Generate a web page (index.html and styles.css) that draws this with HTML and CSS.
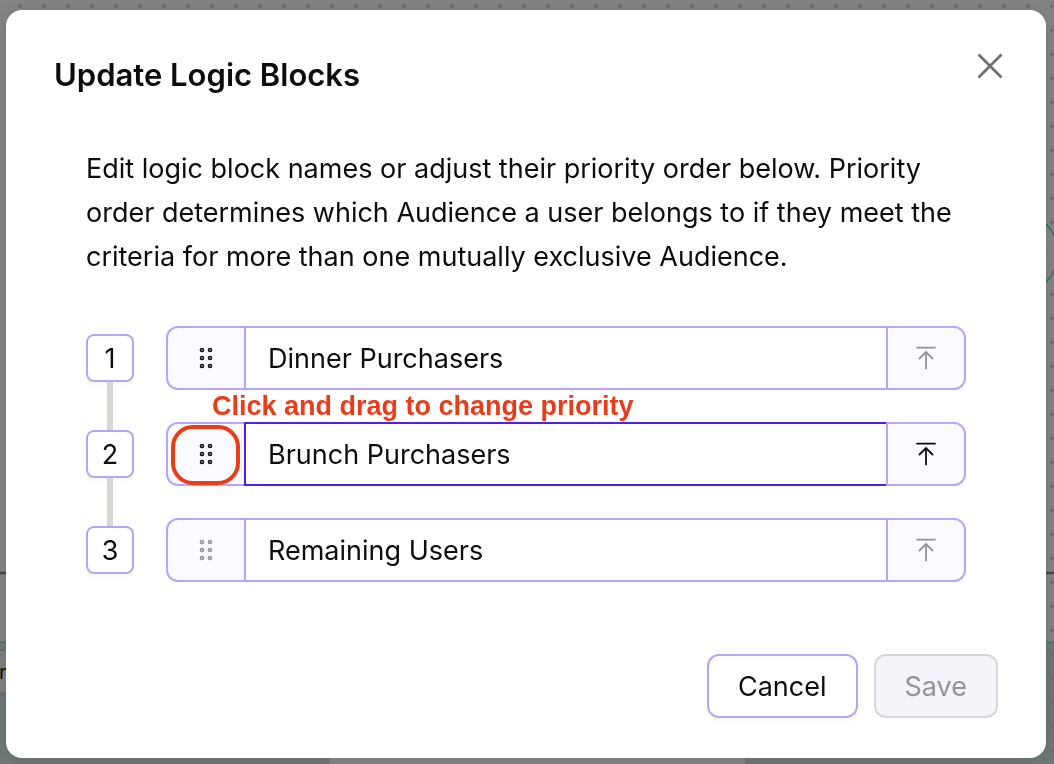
FILE: index.html
```
<!DOCTYPE html>
<html lang="en">
<head>
    <meta charset="UTF-8">
    <meta name="viewport" content="width=device-width, initial-scale=1.0">
    <title>Update Logic Blocks</title>
    <link rel="stylesheet" href="styles.css">
</head>
<body>
    <!-- dimmed canvas behind the dialog -->
    <svg class="canvas" aria-hidden="true">
        <defs>
            <pattern id="dots" width="24" height="24" patternUnits="userSpaceOnUse">
                <circle cx="20" cy="6" r="2" fill="#6f6f6f"/>
            </pattern>
        </defs>
        <rect width="100%" height="100%" fill="#848484"/>
        <rect y="642" width="330" height="400" fill="#6f7876"/>
        <rect x="745" y="642" width="100%" height="400" fill="#6f7876"/>
        <rect width="100%" height="642" fill="url(#dots)"/>
        <rect x="745" y="642" width="100%" height="400" fill="url(#dots)"/>
        <path d="M0 573H2000" stroke="#43464a" stroke-width="2.6"/>
        <path d="M0 642.5H2000" stroke="#4e7d79" stroke-width="3"/>
        <circle cx="1017" cy="253" r="41" fill="#848484" stroke="#2f6f69" stroke-width="1.5"/>
        <rect x="-60" y="650" width="120" height="43" fill="#808080" stroke="#70688c" stroke-width="2"/>
        <text x="-1" y="679" class="canvas-text">r</text>
    </svg>

    <div class="dialog" role="dialog" aria-labelledby="dialogTitle">
        <header class="dialog-header">
            <h1 id="dialogTitle">Update Logic Blocks</h1>
            <button type="button" class="close" aria-label="Close">
                <svg width="26" height="26" viewBox="0 0 26 26"><path d="M1.5 1.5l23 23M24.5 1.5l-23 23"/></svg>
            </button>
        </header>

        <form id="blocksForm">
            <div class="dialog-body">
                <p>Edit logic block names or adjust their priority order below. Priority order determines which Audience a user belongs to if they meet the criteria for more than one mutually exclusive Audience.</p>

                <div class="blocks">
                    <div class="steps">
                        <span class="step">1</span>
                        <span class="connector"></span>
                        <span class="step">2</span>
                        <span class="connector"></span>
                        <span class="step">3</span>
                    </div>

                    <div class="rows">
                        <div class="row">
                            <button type="button" class="handle" aria-label="Drag block 1">
                                <svg width="14" height="22" viewBox="0 0 14 22"><circle cx="3" cy="3" r="1.6"/><circle cx="11" cy="3" r="1.6"/><circle cx="3" cy="11" r="1.6"/><circle cx="11" cy="11" r="1.6"/><circle cx="3" cy="19" r="1.6"/><circle cx="11" cy="19" r="1.6"/></svg>
                            </button>
                            <input type="text" aria-label="Block 1 name" value="Dinner Purchasers">
                            <button type="button" class="to-top" aria-label="Move block 1 to top" disabled>
                                <svg width="20" height="24" viewBox="0 0 20 24"><path d="M1 1.6h18M10 22.5V6M3.5 12.5L10 6l6.5 6.5"/></svg>
                            </button>
                        </div>

                        <div class="row active">
                            <button type="button" class="handle" aria-label="Drag block 2">
                                <svg width="14" height="22" viewBox="0 0 14 22"><circle cx="3" cy="3" r="1.6"/><circle cx="11" cy="3" r="1.6"/><circle cx="3" cy="11" r="1.6"/><circle cx="11" cy="11" r="1.6"/><circle cx="3" cy="19" r="1.6"/><circle cx="11" cy="19" r="1.6"/></svg>
                            </button>
                            <input type="text" aria-label="Block 2 name" value="Brunch Purchasers">
                            <button type="button" class="to-top" aria-label="Move block 2 to top">
                                <svg width="20" height="24" viewBox="0 0 20 24"><path d="M1 1.6h18M10 22.5V6M3.5 12.5L10 6l6.5 6.5"/></svg>
                            </button>
                            <span class="hint">Click and drag to change priority</span>
                            <span class="hint-ring"></span>
                        </div>

                        <div class="row">
                            <button type="button" class="handle" aria-label="Drag block 3" disabled>
                                <svg width="14" height="22" viewBox="0 0 14 22"><circle cx="3" cy="3" r="1.6"/><circle cx="11" cy="3" r="1.6"/><circle cx="3" cy="11" r="1.6"/><circle cx="11" cy="11" r="1.6"/><circle cx="3" cy="19" r="1.6"/><circle cx="11" cy="19" r="1.6"/></svg>
                            </button>
                            <input type="text" aria-label="Block 3 name" value="Remaining Users">
                            <button type="button" class="to-top" aria-label="Move block 3 to top" disabled>
                                <svg width="20" height="24" viewBox="0 0 20 24"><path d="M1 1.6h18M10 22.5V6M3.5 12.5L10 6l6.5 6.5"/></svg>
                            </button>
                        </div>
                    </div>
                </div>
            </div>

            <footer class="dialog-footer">
                <button type="button" class="btn btn-cancel">Cancel</button>
                <button type="submit" class="btn btn-save" disabled>Save</button>
            </footer>
        </form>
    </div>
</body>
</html>
```
FILE: styles.css
```
* {
    box-sizing: border-box;
}
body {
    margin: 0;
    padding: 10px 8px 6px 6px;
    font-family: Inter, Arial, sans-serif;
    font-size: 27px;
    color: #0d0d0d;
    background-color: #848484;
}
button,
input {
    font: inherit;
    color: inherit;
    margin: 0;
}
button {
    cursor: pointer;
}
button:disabled {
    cursor: not-allowed;
}
svg {
    display: block;
}
.canvas {
    position: fixed;
    top: 0;
    left: 0;
    width: 100%;
    height: 100%;
}
.canvas-text {
    font-size: 20px;
    fill: #0d0d0d;
}
.dialog {
    position: relative;
    background-color: white;
    border-radius: 16px;
    padding: 40px 48px;
    box-shadow: 0 0 16px rgba(0, 0, 0, 0.1);
}
.dialog-header {
    display: flex;
    justify-content: space-between;
    align-items: flex-start;
    margin-bottom: 48px;
}
h1 {
    margin: 0;
    padding: 3px 0 2px;
    font-size: 31px;
    font-weight: 600;
    line-height: 44px;
}
.close {
    padding: 3px;
    margin-right: -8px;
    border: none;
    background: none;
}
.close path {
    stroke: #707070;
    stroke-width: 2.8;
    fill: none;
}
.dialog-body {
    padding: 0 32px;
}
.dialog-body p {
    margin: 0 0 47px;
    line-height: 44px;
}
.blocks {
    display: flex;
    gap: 32px;
}
.steps {
    display: flex;
    flex-direction: column;
    align-items: center;
    padding: 8px 0;
}
.step {
    display: flex;
    align-items: center;
    justify-content: center;
    width: 48px;
    height: 48px;
    border: 2px solid #b7a5fd;
    border-radius: 8px;
    box-shadow: 0 4px 2px rgba(80, 60, 200, 0.03);
}
.connector {
    width: 6px;
    height: 48px;
    background-color: #d7d7d3;
}
.rows {
    flex: 1;
    display: flex;
    flex-direction: column;
    gap: 32px;
}
.row {
    position: relative;
    display: flex;
    height: 64px;
}
.handle,
.to-top {
    display: flex;
    align-items: center;
    justify-content: center;
    width: 80px;
    padding: 0;
    border: 2px solid #b7a5fd;
    background-color: #fbfafe;
}
.handle {
    width: 78px;
    border-right: none;
    border-radius: 12px 0 0 12px;
}
.to-top {
    border-radius: 0 12px 12px 0;
}
.handle circle {
    fill: #999;
    stroke: #0d0d0d;
    stroke-width: 1.4;
}
.handle:disabled circle {
    fill: #ccc;
    stroke: #949494;
}
.to-top path {
    fill: none;
    stroke: #0d0d0d;
    stroke-width: 1.8;
    stroke-linecap: round;
}
.to-top:disabled path {
    stroke: #949494;
}
.row input {
    flex: 1;
    min-width: 0;
    padding: 0 22px;
    border: 2px solid #b7a5fd;
    border-right: none;
    border-radius: 0;
    background-color: white;
    outline: none;
}
.row.active input,
.row input:focus {
    border-color: #4f1fe8;
}
.hint {
    position: absolute;
    top: -32px;
    left: 46px;
    font-family: "Liberation Sans", Arial, sans-serif;
    font-size: 27px;
    font-weight: bold;
    line-height: 32px;
    color: #e83c1b;
    white-space: nowrap;
    pointer-events: none;
}
.hint-ring {
    position: absolute;
    top: 3px;
    left: 5px;
    width: 69px;
    height: 60px;
    border: 4px solid #e83c1b;
    border-radius: 22px;
    pointer-events: none;
}
.dialog-footer {
    display: flex;
    justify-content: flex-end;
    gap: 16px;
    margin-top: 72px;
}
.btn {
    height: 64px;
    padding: 0 29px;
    border: 2px solid #b7a5fd;
    border-radius: 12px;
    background-color: white;
}
.btn-cancel {
    box-shadow: 0 4px 2px rgba(80, 60, 200, 0.03);
}
.btn-save:disabled {
    border-color: #d7d7d3;
    background-color: #f5f4fa;
    color: #949494;
}
```
